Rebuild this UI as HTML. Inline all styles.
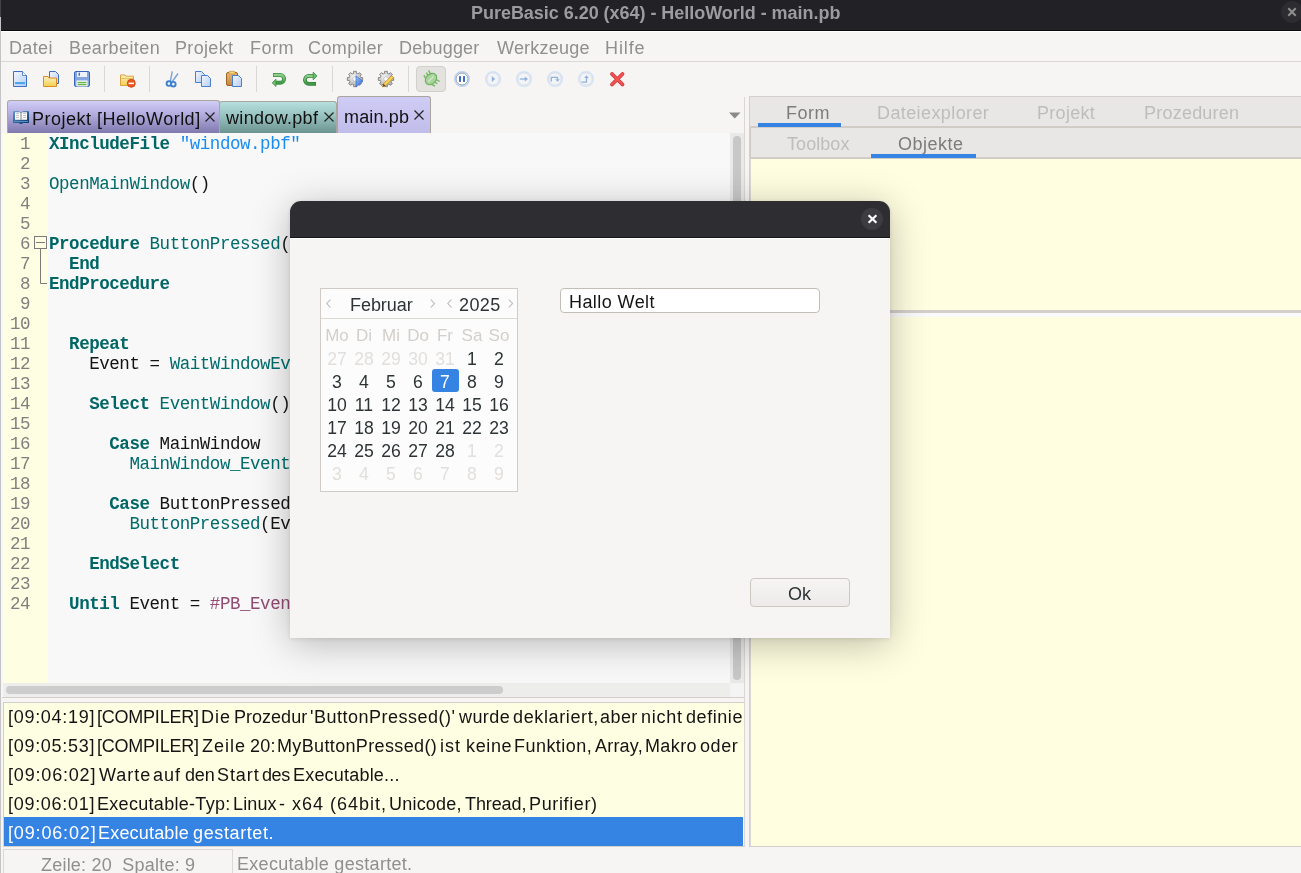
<!DOCTYPE html>
<html><head><meta charset="utf-8">
<style>
*{box-sizing:border-box;margin:0;padding:0}
html,body{width:1301px;height:873px;overflow:hidden;background:#f6f5f4;font-family:"Liberation Sans",sans-serif;position:relative}
.a{position:absolute}
.tx{position:absolute;will-change:transform;white-space:pre;line-height:normal;font-family:"Liberation Sans",sans-serif}
.code{position:absolute;will-change:transform;font-family:"Liberation Mono",monospace;font-size:17.5px;letter-spacing:-0.45px;white-space:pre;line-height:20px}
.kw{color:#006666;font-weight:bold}
.fn{color:#006b6b}
.str{color:#1a8cf0}
.cst{color:#924b72}
svg{position:absolute;overflow:visible}
</style></head><body>

<div class="a" style="left:0;top:0;width:1301px;height:31px;background:#222126"></div>
<div class="a" style="left:0;top:30px;width:1301px;height:1px;background:#0b0b0e"></div>
<div class="a" style="left:0;top:31px;width:1301px;height:1px;background:#ffffff"></div>
<div class="tx" style="left:470.5px;top:3.0px;font-size:18px;letter-spacing:-0.033px;color:#9c9c9e;font-weight:bold;">PureBasic 6.20 (x64) - HelloWorld - main.pb</div>

<div class="a" style="left:1281px;top:1px;width:22px;height:22px;border-radius:11px;background:#2d2c31"></div>
<svg style="left:1288px;top:8px" width="8" height="8"><path d="M0.3 0.3L7.7 7.7M7.7 0.3L0.3 7.7" stroke="#8e8e8e" stroke-width="2.1"/></svg>
<div class="a" style="left:0;top:17px;width:1px;height:856px;background:#c4c4c4"></div>
<div class="a" style="left:0;top:0;width:1px;height:17px;background:#444446"></div>
<div class="tx" style="left:9.0px;top:38.0px;font-size:18px;letter-spacing:0.35px;color:#8f8f8f;">Datei</div>

<div class="tx" style="left:69.0px;top:38.0px;font-size:18px;letter-spacing:0.4px;color:#8f8f8f;">Bearbeiten</div>

<div class="tx" style="left:174.8px;top:38.0px;font-size:18px;letter-spacing:0.333px;color:#8f8f8f;">Projekt</div>

<div class="tx" style="left:249.6px;top:38.0px;font-size:18px;letter-spacing:0.467px;color:#8f8f8f;">Form</div>

<div class="tx" style="left:308.4px;top:38.0px;font-size:18px;letter-spacing:0.4px;color:#8f8f8f;">Compiler</div>

<div class="tx" style="left:399.4px;top:38.0px;font-size:18px;letter-spacing:0.171px;color:#8f8f8f;">Debugger</div>

<div class="tx" style="left:496.6px;top:38.0px;font-size:18px;letter-spacing:0.225px;color:#8f8f8f;">Werkzeuge</div>

<div class="tx" style="left:604.7px;top:38.0px;font-size:18px;letter-spacing:0.9px;color:#8f8f8f;">Hilfe</div>

<div class="a" style="left:1px;top:61px;width:1300px;height:1px;background:#dcd9d5"></div>
<div class="a" style="left:104px;top:66px;width:1px;height:26px;background:#dad8d4"></div>
<div class="a" style="left:149px;top:66px;width:1px;height:26px;background:#dad8d4"></div>
<div class="a" style="left:256px;top:66px;width:1px;height:26px;background:#dad8d4"></div>
<div class="a" style="left:332px;top:66px;width:1px;height:26px;background:#dad8d4"></div>
<div class="a" style="left:408px;top:66px;width:1px;height:26px;background:#dad8d4"></div>
<div class="a" style="left:416px;top:66px;width:30px;height:26px;border-radius:4px;background:#e3e2de;border:1px solid #d2d0cb"></div>
<svg width="0" height="0" style="left:0;top:0"><defs>
<linearGradient id="gpage" x1="0" y1="0" x2="1" y2="1"><stop offset="0" stop-color="#f3f7fd"/><stop offset="1" stop-color="#b6cef3"/></linearGradient>
<linearGradient id="gfold" x1="0" y1="0" x2="0" y2="1"><stop offset="0" stop-color="#fdf0c0"/><stop offset="1" stop-color="#f5cf50"/></linearGradient>
<linearGradient id="gclip" x1="0" y1="0" x2="0" y2="1"><stop offset="0" stop-color="#e7b87a"/><stop offset="1" stop-color="#c7843c"/></linearGradient>
<linearGradient id="ggreen" x1="0" y1="0" x2="0" y2="1"><stop offset="0" stop-color="#8fd08a"/><stop offset="1" stop-color="#3f9a45"/></linearGradient>
<linearGradient id="gblue" x1="0" y1="0" x2="1" y2="1"><stop offset="0" stop-color="#9cc0f2"/><stop offset="1" stop-color="#2a66d4"/></linearGradient>
<radialGradient id="ggear" cx="0.4" cy="0.35" r="0.7"><stop offset="0" stop-color="#f4f4f4"/><stop offset="1" stop-color="#a9a9a9"/></radialGradient>
</defs></svg>
<svg style="left:13px;top:71px" width="14" height="16"><path d="M0.5 0.5H9.5L13.5 4.5V15.5H0.5Z" fill="url(#gpage)" stroke="#3d70c4"/><path d="M9.5 0.5V4.5H13.5" fill="#fff" stroke="#3d70c4" stroke-width="0.8"/><rect x="2" y="11" width="10" height="2.2" fill="#4fa6f0"/></svg>
<svg style="left:43px;top:71px" width="17" height="16"><path d="M6.5 0.5H12.5L15.5 3.5V12.5H6.5Z" fill="url(#gpage)" stroke="#3d70c4"/><path d="M0.5 5.5H5L6 7H13.5V15.5H0.5Z" fill="url(#gfold)" stroke="#dc8e24"/><path d="M1 9H13" stroke="#f7e7a5" stroke-width="1"/></svg>
<svg style="left:74px;top:71px" width="16" height="16"><rect x="0.5" y="0.5" width="15" height="15" rx="1.5" fill="#86a6e2" stroke="#3a64be"/><rect x="3" y="1" width="10" height="5" fill="#eef3fb"/><rect x="4.6" y="1.6" width="1.3" height="3.2" fill="#3a64be"/><rect x="2.5" y="9.5" width="11" height="6" fill="#fff"/><rect x="3.5" y="10.8" width="9" height="1.5" fill="#68b44a"/><rect x="3.5" y="13" width="9" height="1.3" fill="#68b44a"/></svg>
<svg style="left:120px;top:74px" width="16" height="14"><path d="M0.5 1H5L6 2.2H13.5V11.5H0.5Z" fill="url(#gfold)" stroke="#d9a43e"/><path d="M1 4.5H13" stroke="#e3b950" stroke-width="0.8"/><circle cx="11.3" cy="9.3" r="4" fill="#ea5a1e" stroke="#c8401a" stroke-width="0.8"/><rect x="8.6" y="8.6" width="5.4" height="1.5" fill="#fff"/></svg>
<svg style="left:166px;top:71px" width="13" height="16"><path d="M4.2 11L6.3 0.3M6.3 10.5L12 2.5" stroke="#7aa3d6" stroke-width="1.4" fill="none"/><circle cx="2.9" cy="12.6" r="2.3" fill="none" stroke="#3f81cc" stroke-width="1.9"/><circle cx="7.3" cy="13.2" r="2.3" fill="none" stroke="#3f81cc" stroke-width="1.9"/></svg>
<svg style="left:195px;top:71px" width="17" height="16"><path d="M0.5 0.5H6.5L9.5 3.5V11.5H0.5Z" fill="url(#gpage)" stroke="#4a7fd0"/><path d="M6.5 4.5H12.5L15.5 7.5V15.5H6.5Z" fill="url(#gpage)" stroke="#4a7fd0"/></svg>
<svg style="left:226px;top:71px" width="17" height="16"><rect x="0.5" y="1.5" width="11" height="13" rx="1.5" fill="url(#gclip)" stroke="#9e6522"/><rect x="3" y="0.3" width="6" height="2.8" rx="0.8" fill="#f1d27a" stroke="#b98a2e" stroke-width="0.6"/><path d="M6.5 4.5H12.5L15.5 7.5V15.5H6.5Z" fill="url(#gpage)" stroke="#4a7fd0"/></svg>
<svg style="left:272px;top:72px" width="16" height="16"><path d="M1 3H8.2A3.9 3.9 0 0 1 8.2 10.8H3.6" fill="none" stroke="#3d8f44" stroke-width="3.9"/><path d="M1.6 3H8.2A3.9 3.9 0 0 1 8.2 10.8H3.6" fill="none" stroke="url(#ggreen)" stroke-width="2.3"/><path d="M0.2 10.8L3.9 7.1V14.6Z" fill="#6cbb6c" stroke="#3d8f44" stroke-width="0.8" stroke-linejoin="round"/></svg>
<svg style="left:303px;top:72px" width="16" height="16"><path d="M13 11.85H5.9A3.97 3.97 0 0 1 5.9 3.9H10.6" fill="none" stroke="#2f7d36" stroke-width="3.7"/><path d="M12.4 11.85H5.9A3.97 3.97 0 0 1 5.9 3.9H10.6" fill="none" stroke="url(#ggreen)" stroke-width="2.1"/><path d="M14 3.9L10.2 0.1V7.9Z" fill="#6cbb6c" stroke="#3d8f44" stroke-width="0.8" stroke-linejoin="round"/></svg>
<svg style="left:347px;top:71px" width="17" height="16"><path d="M5.83,2.62 L6.65,2.36 L6.54,0.34 L9.46,0.34 L9.35,2.36 L10.27,2.66 L11.03,3.05 L12.38,1.55 L14.45,3.62 L12.95,4.97 L13.38,5.83 L13.64,6.65 L15.66,6.54 L15.66,9.46 L13.64,9.35 L13.34,10.27 L12.95,11.03 L14.45,12.38 L12.38,14.45 L11.03,12.95 L10.17,13.38 L9.35,13.64 L9.46,15.66 L6.54,15.66 L6.65,13.64 L5.73,13.34 L4.97,12.95 L3.62,14.45 L1.55,12.38 L3.05,11.03 L2.62,10.17 L2.36,9.35 L0.34,9.46 L0.34,6.54 L2.36,6.65 L2.66,5.73 L3.05,4.97 L1.55,3.62 L3.62,1.55 L4.97,3.05Z" fill="url(#ggear)" stroke="#8a8a8a" stroke-width="1"/><circle cx="8" cy="8" r="2.3" fill="#fafafa" stroke="#b0b0b0" stroke-width="0.6"/><path d="M9 4.8L16 10.3L9 16Z" fill="url(#gblue)" stroke="#2a62c8" stroke-width="0.6"/></svg>
<svg style="left:378px;top:71px" width="17" height="16"><path d="M5.83,2.62 L6.65,2.36 L6.54,0.34 L9.46,0.34 L9.35,2.36 L10.27,2.66 L11.03,3.05 L12.38,1.55 L14.45,3.62 L12.95,4.97 L13.38,5.83 L13.64,6.65 L15.66,6.54 L15.66,9.46 L13.64,9.35 L13.34,10.27 L12.95,11.03 L14.45,12.38 L12.38,14.45 L11.03,12.95 L10.17,13.38 L9.35,13.64 L9.46,15.66 L6.54,15.66 L6.65,13.64 L5.73,13.34 L4.97,12.95 L3.62,14.45 L1.55,12.38 L3.05,11.03 L2.62,10.17 L2.36,9.35 L0.34,9.46 L0.34,6.54 L2.36,6.65 L2.66,5.73 L3.05,4.97 L1.55,3.62 L3.62,1.55 L4.97,3.05Z" fill="url(#ggear)" stroke="#8a8a8a" stroke-width="1"/><circle cx="8" cy="8" r="2.3" fill="#fafafa" stroke="#b0b0b0" stroke-width="0.6"/><path d="M4.5 15.8L5.5 12.8L13.6 4.7L15.6 6.7L7.5 14.8Z" fill="#f5d54a" stroke="#c98a30" stroke-width="0.8"/><path d="M4.5 15.8L5.5 12.8L7.5 14.8Z" fill="#6a3c12"/></svg>
<svg style="left:422px;top:70px" width="18" height="18"><path d="M3.49 8.01L2.21 5.61M9.99 14.51L12.39 15.79M5.89 5.61L4.62 3.20M12.39 12.11L14.80 13.38M8.15 3.34L6.88 0.94M14.66 9.85L17.06 11.12" stroke="#79bd6c" stroke-width="1.6" stroke-linecap="round"/><ellipse cx="9" cy="9" rx="4.9" ry="6.4" transform="rotate(45 9 9)" fill="#a9d49b" stroke="#6fae62" stroke-width="1.1"/><path d="M6.4 11.6L11.6 6.4" stroke="#d8edd0" stroke-width="1.3"/></svg>
<svg style="left:454px;top:71px" width="16" height="16"><circle cx="8" cy="8" r="7.3" fill="none" stroke="#b9d2f2" stroke-width="1.4"/><circle cx="8" cy="8" r="6" fill="#fdfdfd" stroke="#8a94a4" stroke-width="0.9"/><rect x="5" y="5.1" width="2" height="5.8" fill="#3a6fc4"/><rect x="9" y="5.1" width="2" height="5.8" fill="#3a6fc4"/></svg>
<svg style="left:485px;top:71px" width="16" height="16"><circle cx="8" cy="8" r="7.3" fill="none" stroke="#d3e3f7" stroke-width="1.5"/><circle cx="8" cy="8" r="6.1" fill="#f2f4f8" stroke="#d6d9de" stroke-width="0.8"/><path d="M6.8 5L10.2 8L6.8 11Z" fill="#90b0de"/></svg>
<svg style="left:516px;top:71px" width="16" height="16"><circle cx="8" cy="8" r="7.3" fill="none" stroke="#d3e3f7" stroke-width="1.5"/><circle cx="8" cy="8" r="6.1" fill="#f2f4f8" stroke="#d6d9de" stroke-width="0.8"/><path d="M3.8 8H9" stroke="#90b0de" stroke-width="1.3"/><path d="M8.8 5.6L12 8L8.8 10.4Z" fill="#90b0de"/></svg>
<svg style="left:547px;top:71px" width="16" height="16"><circle cx="8" cy="8" r="7.3" fill="none" stroke="#d3e3f7" stroke-width="1.5"/><circle cx="8" cy="8" r="6.1" fill="#f2f4f8" stroke="#d6d9de" stroke-width="0.8"/><path d="M4.3 10.5V6.3H10.5V8.3" fill="none" stroke="#90b0de" stroke-width="1.3"/><path d="M8.2 8.2H12.8L10.5 10.8Z" fill="#90b0de"/></svg>
<svg style="left:578px;top:71px" width="16" height="16"><circle cx="8" cy="8" r="7.3" fill="none" stroke="#d3e3f7" stroke-width="1.5"/><circle cx="8" cy="8" r="6.1" fill="#f2f4f8" stroke="#d6d9de" stroke-width="0.8"/><path d="M3.5 11.2H8.5V6.8" fill="none" stroke="#90b0de" stroke-width="1.3"/><path d="M6.2 7L8.5 4.2L10.8 7Z" fill="#90b0de"/></svg>
<svg style="left:609px;top:71px" width="16" height="16"><path d="M3 3L13.5 13.5M13.5 3L3 13.5" stroke="#d23030" stroke-width="3.8" stroke-linecap="round"/><path d="M3 3L13.5 13.5M13.5 3L3 13.5" stroke="#f25454" stroke-width="2.4" stroke-linecap="round"/></svg>
<div class="a" style="left:7px;top:100px;width:213px;height:33px;border:1px solid #aaa59f;border-bottom:none;border-radius:3px 3px 0 0;background:linear-gradient(#d0cdf7,#b0aadc 45%,#7f79ae)"></div>
<div class="a" style="left:219px;top:101px;width:118px;height:32px;border:1px solid #aaa59f;border-bottom:none;border-radius:3px 3px 0 0;background:linear-gradient(#b5dfdc,#98c2bf 45%,#6b9491)"></div>
<div class="a" style="left:337px;top:96px;width:94px;height:37px;border:1px solid #aaa59f;border-bottom:none;border-radius:3px 3px 0 0;background:linear-gradient(#cfccf5,#c1bdea)"></div>
<div class="tx" style="left:31.7px;top:108.7px;font-size:18px;letter-spacing:0.495px;color:#111;">Projekt [HelloWorld]</div>

<div class="tx" style="left:225.7px;top:108.0px;font-size:18px;letter-spacing:0.322px;color:#111;">window.pbf</div>

<div class="tx" style="left:343.7px;top:106.8px;font-size:18px;letter-spacing:0.15px;color:#111;">main.pb</div>

<svg style="left:205px;top:112px" width="10" height="10"><path d="M0.5 0.5L9.5 9.5M9.5 0.5L0.5 9.5" stroke="#222" stroke-width="1.2"/></svg>
<svg style="left:323.5px;top:112px" width="10" height="10"><path d="M0.5 0.5L9.5 9.5M9.5 0.5L0.5 9.5" stroke="#222" stroke-width="1.2"/></svg>
<svg style="left:414px;top:110px" width="10" height="10"><path d="M0.5 0.5L9.5 9.5M9.5 0.5L0.5 9.5" stroke="#222" stroke-width="1.2"/></svg>
<svg style="left:13px;top:110px" width="16" height="15"><defs><linearGradient id="gbook" x1="0" y1="0" x2="1" y2="1"><stop offset="0" stop-color="#5a96cc"/><stop offset="1" stop-color="#0a3468"/></linearGradient></defs><path d="M0 1.2H5.5L8 2.2L10.5 1.2H16V13H9.5V14H6.5V13H0Z" fill="url(#gbook)"/><path d="M2 2.3H6.5L8 3L9.5 2.3H14V9.8H2Z" fill="#fdfdfd"/><rect x="7.4" y="2.8" width="1.3" height="7" fill="#9a9a9a"/><path d="M3 3.6H6M3 5.6H6M3 7.6H6M10 3.6H13M10 5.6H13M10 7.6H13" stroke="#b9b9b9" stroke-width="0.9"/><rect x="1" y="11" width="14" height="0.9" fill="#5d94c8"/></svg>
<svg style="left:729px;top:112px" width="12" height="7"><path d="M0 0.5H11.5L5.75 6.5Z" fill="#8a8a8a"/></svg>
<div class="a" style="left:2px;top:133px;width:743px;height:565px;background:#f8f8f8;border-right:1px solid #d3cfca;border-bottom:1px solid #d3cfca"></div>
<div class="a" style="left:3px;top:133px;width:45px;height:550px;background:#fefee2"></div>
<div class="a" style="left:730px;top:133px;width:14px;height:550px;background:#e9e9e8"></div>
<div class="a" style="left:733px;top:136px;width:8px;height:544px;border-radius:4px;background:#c8c8c8"></div>
<div class="a" style="left:3px;top:683px;width:727px;height:14px;background:#ededec"></div>
<div class="a" style="left:730px;top:683px;width:14px;height:14px;background:#f4f4f4"></div>
<div class="a" style="left:6px;top:686px;width:497px;height:8px;border-radius:4px;background:#cdcdcd"></div>
<div class="code" style="left:3px;top:134px;width:27px;text-align:right;color:#7f7f7f">1
2
3
4
5
6
7
8
9
10
11
12
13
14
15
16
17
18
19
20
21
22
23
24</div>
<div class="code" style="left:49px;top:134px;color:#141414"><span class="kw">XIncludeFile</span> <span class="str">"window.pbf"</span>

<span class="fn">OpenMainWindow</span>()


<span class="kw">Procedure</span> <span class="fn">ButtonPressed</span>(
  <span class="kw">End</span>
<span class="kw">EndProcedure</span>


  <span class="kw">Repeat</span>
    Event = <span class="fn">WaitWindowEv</span>

    <span class="kw">Select</span> <span class="fn">EventWindow</span>()

      <span class="kw">Case</span> MainWindow
        <span class="fn">MainWindow_Event</span>

      <span class="kw">Case</span> ButtonPressed
        <span class="fn">ButtonPressed</span>(Ev

    <span class="kw">EndSelect</span>

  <span class="kw">Until</span> Event = <span class="cst">#PB_Even</span></div>
<svg style="left:34px;top:236px" width="14" height="52"><rect x="0.5" y="0.5" width="12" height="12" fill="#fefee2" stroke="#7a7a7a"/><path d="M2 6.5H11" stroke="#7a7a7a"/><path d="M6.5 12.5V47.5H13" fill="none" stroke="#7a7a7a"/></svg>
<div class="a" style="left:3px;top:702px;width:742px;height:145px;background:#fefee2;border:1px solid #d3cfca"></div>
<div class="a" style="left:4px;top:817px;width:739px;height:29px;background:#3584e4"></div>
<div class="tx" style="left:8.0px;top:707.0px;font-size:18px;letter-spacing:0.708px;color:#141414">[09:04:19]</div>
<div class="tx" style="left:96.8px;top:707.0px;font-size:18px;letter-spacing:-0.226px;color:#141414">[COMPILER]</div>
<div class="tx" style="left:201.4px;top:707.0px;font-size:18px;letter-spacing:1.0px;color:#141414">Die</div>
<div class="tx" style="left:233.5px;top:707.0px;font-size:18px;letter-spacing:0.016px;color:#141414">Prozedur</div>
<div class="tx" style="left:310.3px;top:707.0px;font-size:18px;letter-spacing:0.505px;color:#141414">'ButtonPressed()'</div>
<div class="tx" style="left:459.0px;top:707.0px;font-size:18px;letter-spacing:0.43px;color:#141414">wurde</div>
<div class="tx" style="left:512.8px;top:707.0px;font-size:18px;letter-spacing:0.63px;color:#141414">deklariert,</div>
<div class="tx" style="left:600.0px;top:707.0px;font-size:18px;letter-spacing:0.43px;color:#141414">aber</div>
<div class="tx" style="left:641.0px;top:707.0px;font-size:18px;letter-spacing:0.73px;color:#141414">nicht</div>
<div class="tx" style="left:685.5px;top:707.0px;font-size:18px;letter-spacing:0.563px;color:#141414">definie</div>
<div class="tx" style="left:8.0px;top:736.0px;font-size:18px;letter-spacing:0.708px;color:#141414">[09:05:53]</div>
<div class="tx" style="left:96.8px;top:736.0px;font-size:18px;letter-spacing:-0.226px;color:#141414">[COMPILER]</div>
<div class="tx" style="left:202.4px;top:736.0px;font-size:18px;letter-spacing:1.0px;color:#141414">Zeile</div>
<div class="tx" style="left:249.6px;top:736.0px;font-size:18px;letter-spacing:0.18px;color:#141414">20:</div>
<div class="tx" style="left:277.4px;top:736.0px;font-size:18px;letter-spacing:0.355px;color:#141414">MyButtonPressed()</div>
<div class="tx" style="left:439.9px;top:736.0px;font-size:18px;letter-spacing:1.0px;color:#141414">ist</div>
<div class="tx" style="left:465.6px;top:736.0px;font-size:18px;letter-spacing:0.63px;color:#141414">keine</div>
<div class="tx" style="left:513.8px;top:736.0px;font-size:18px;letter-spacing:0.455px;color:#141414">Funktion,</div>
<div class="tx" style="left:594.8px;top:736.0px;font-size:18px;letter-spacing:0.21px;color:#141414">Array,</div>
<div class="tx" style="left:645.2px;top:736.0px;font-size:18px;letter-spacing:0.38px;color:#141414">Makro</div>
<div class="tx" style="left:699.9px;top:736.0px;font-size:18px;letter-spacing:0.597px;color:#141414">oder</div>
<div class="tx" style="left:8.0px;top:765.0px;font-size:18px;letter-spacing:0.819px;color:#141414">[09:06:02]</div>
<div class="tx" style="left:99.3px;top:765.0px;font-size:18px;letter-spacing:0.98px;color:#141414">Warte</div>
<div class="tx" style="left:153.2px;top:765.0px;font-size:18px;letter-spacing:1.0px;color:#141414">auf</div>
<div class="tx" style="left:184.5px;top:765.0px;font-size:18px;letter-spacing:-0.17px;color:#141414">den</div>
<div class="tx" style="left:216.6px;top:765.0px;font-size:18px;letter-spacing:0.93px;color:#141414">Start</div>
<div class="tx" style="left:261.9px;top:765.0px;font-size:18px;letter-spacing:-0.4px;color:#141414">des</div>
<div class="tx" style="left:292.5px;top:765.0px;font-size:18px;letter-spacing:0.197px;color:#141414">Executable...</div>
<div class="tx" style="left:8.0px;top:794.0px;font-size:18px;letter-spacing:0.708px;color:#141414">[09:06:01]</div>
<div class="tx" style="left:96.8px;top:794.0px;font-size:18px;letter-spacing:0.301px;color:#141414">Executable-Typ:</div>
<div class="tx" style="left:232.7px;top:794.0px;font-size:18px;letter-spacing:0.13px;color:#141414">Linux</div>
<div class="tx" style="left:279.4px;top:794.0px;font-size:18px;letter-spacing:0.13px;color:#141414">-</div>
<div class="tx" style="left:292.0px;top:794.0px;font-size:18px;letter-spacing:1.0px;color:#141414">x64</div>
<div class="tx" style="left:329.8px;top:794.0px;font-size:18px;letter-spacing:1.0px;color:#141414">(64bit,</div>
<div class="tx" style="left:388.6px;top:794.0px;font-size:18px;letter-spacing:0.216px;color:#141414">Unicode,</div>
<div class="tx" style="left:464.9px;top:794.0px;font-size:18px;letter-spacing:-0.103px;color:#141414">Thread,</div>
<div class="tx" style="left:528.8px;top:794.0px;font-size:18px;letter-spacing:0.63px;color:#141414">Purifier)</div>
<div class="tx" style="left:8.0px;top:823.0px;font-size:18px;letter-spacing:0.841px;color:#ffffff">[09:06:02]</div>
<div class="tx" style="left:98.4px;top:823.0px;font-size:18px;letter-spacing:0.186px;color:#ffffff">Executable</div>
<div class="tx" style="left:192.6px;top:823.0px;font-size:18px;letter-spacing:0.619px;color:#ffffff">gestartet.</div>
<div class="a" style="left:744px;top:97px;width:1px;height:750px;background:#dad6d1"></div>
<div class="a" style="left:3px;top:849px;width:230px;height:30px;border:1px solid #dcd9d5"></div>
<div class="tx" style="left:41.0px;top:854.5px;font-size:18px;letter-spacing:0.211px;color:#8f8f8f;">Zeile: 20  Spalte: 9</div>

<div class="tx" style="left:236.8px;top:854.4px;font-size:18px;letter-spacing:0.3px;color:#8f8f8f;">Executable gestartet.</div>

<div class="a" style="left:749px;top:96px;width:560px;height:751px;border:1px solid #d3cfca;background:#fffee0"></div>
<div class="a" style="left:750px;top:97px;width:551px;height:31px;background:#e8e7e5;border-bottom:2px solid #d2ccc6"></div>
<div class="a" style="left:750px;top:128px;width:551px;height:31px;background:#e8e7e5;border-left:1px solid #d2ccc6;border-bottom:2px solid #d2ccc6"></div>
<div class="a" style="left:758px;top:123px;width:83px;height:4px;background:#3584e4"></div>
<div class="a" style="left:871px;top:154px;width:105px;height:4px;background:#3584e4"></div>
<div class="tx" style="left:786.0px;top:102.6px;font-size:18px;letter-spacing:0.533px;color:#7c7c7c;">Form</div>

<div class="tx" style="left:876.8px;top:102.6px;font-size:18px;letter-spacing:0.4px;color:#bdbdbd;">Dateiexplorer</div>

<div class="tx" style="left:1036.5px;top:102.6px;font-size:18px;letter-spacing:0.3px;color:#bdbdbd;">Projekt</div>

<div class="tx" style="left:1143.6px;top:102.6px;font-size:18px;letter-spacing:0.222px;color:#bdbdbd;">Prozeduren</div>

<div class="tx" style="left:787.4px;top:133.8px;font-size:18px;letter-spacing:0.067px;color:#bdbdbd;">Toolbox</div>

<div class="tx" style="left:898.3px;top:133.8px;font-size:18px;letter-spacing:0.5px;color:#7c7c7c;">Objekte</div>

<div class="a" style="left:750px;top:159px;width:1px;height:687px;background:#dcd8d3"></div>
<div class="a" style="left:751px;top:310px;width:550px;height:3px;background:#d3cfcb"></div>
<div class="a" style="left:751px;top:313px;width:550px;height:4px;background:#fafafa"></div>
<div class="a" style="left:290px;top:201px;width:600px;height:437px;background:#f6f5f4;border-radius:11px 11px 0 0;box-shadow:0 1px 5px rgba(0,0,0,0.10),0 6px 38px rgba(0,0,0,0.26)"></div>
<div class="a" style="left:290px;top:201px;width:600px;height:37px;background:#2e2d32;border-radius:11px 11px 0 0"></div>
<div class="a" style="left:290px;top:237px;width:600px;height:1px;background:#16161a"></div>
<div class="a" style="left:290px;top:238px;width:600px;height:1px;background:#ffffff"></div>
<div class="a" style="left:861px;top:208px;width:22px;height:22px;border-radius:11px;background:#3d3c41"></div>
<svg style="left:867.5px;top:215px" width="9" height="8"><path d="M0.6 0.3L8.4 7.7M8.4 0.3L0.6 7.7" stroke="#ffffff" stroke-width="2.2"/></svg>
<div class="a" style="left:320px;top:288px;width:198px;height:204px;background:#fcfcfc;border:1px solid #d0cbc6"></div>
<div class="a" style="left:321px;top:318px;width:196px;height:1px;background:#dcd8d3"></div>
<div class="tx" style="left:349.6px;top:295.0px;font-size:18px;letter-spacing:-0.05px;color:#2e3436;">Februar</div>

<div class="tx" style="left:458.6px;top:295.0px;font-size:18px;letter-spacing:0.4px;color:#2e3436;">2025</div>

<svg style="left:326px;top:299px" width="6" height="9"><path d="M4.5 0.5L0.8 4.5L4.5 8.5" stroke="#b8b8b8" stroke-width="1.1" fill="none"/></svg>
<svg style="left:447px;top:299px" width="6" height="9"><path d="M4.5 0.5L0.8 4.5L4.5 8.5" stroke="#b8b8b8" stroke-width="1.1" fill="none"/></svg>
<svg style="left:430px;top:299px" width="6" height="9"><path d="M0.8 0.5L4.5 4.5L0.8 8.5" stroke="#b8b8b8" stroke-width="1.1" fill="none"/></svg>
<svg style="left:507.5px;top:299px" width="6" height="9"><path d="M0.8 0.5L4.5 4.5L0.8 8.5" stroke="#b8b8b8" stroke-width="1.1" fill="none"/></svg>
<div class="a" style="left:432px;top:369px;width:27px;height:23px;border-radius:3px;background:#3584e4"></div>
<div class="tx" style="left:317px;top:326.2px;width:40px;text-align:center;font-size:17px;color:#d3cfca">Mo</div>
<div class="tx" style="left:344px;top:326.2px;width:40px;text-align:center;font-size:17px;color:#d3cfca">Di</div>
<div class="tx" style="left:371px;top:326.2px;width:40px;text-align:center;font-size:17px;color:#d3cfca">Mi</div>
<div class="tx" style="left:398px;top:326.2px;width:40px;text-align:center;font-size:17px;color:#d3cfca">Do</div>
<div class="tx" style="left:425px;top:326.2px;width:40px;text-align:center;font-size:17px;color:#d3cfca">Fr</div>
<div class="tx" style="left:452px;top:326.2px;width:40px;text-align:center;font-size:17px;color:#d3cfca">Sa</div>
<div class="tx" style="left:479px;top:326.2px;width:40px;text-align:center;font-size:17px;color:#d3cfca">So</div>
<div class="tx" style="left:317px;top:349px;width:40px;text-align:center;font-size:17.6px;color:#e2dfdc">27</div>
<div class="tx" style="left:344px;top:349px;width:40px;text-align:center;font-size:17.6px;color:#e2dfdc">28</div>
<div class="tx" style="left:371px;top:349px;width:40px;text-align:center;font-size:17.6px;color:#e2dfdc">29</div>
<div class="tx" style="left:398px;top:349px;width:40px;text-align:center;font-size:17.6px;color:#e2dfdc">30</div>
<div class="tx" style="left:425px;top:349px;width:40px;text-align:center;font-size:17.6px;color:#e2dfdc">31</div>
<div class="tx" style="left:452px;top:349px;width:40px;text-align:center;font-size:17.6px;color:#2e3436">1</div>
<div class="tx" style="left:479px;top:349px;width:40px;text-align:center;font-size:17.6px;color:#2e3436">2</div>
<div class="tx" style="left:317px;top:372px;width:40px;text-align:center;font-size:17.6px;color:#2e3436">3</div>
<div class="tx" style="left:344px;top:372px;width:40px;text-align:center;font-size:17.6px;color:#2e3436">4</div>
<div class="tx" style="left:371px;top:372px;width:40px;text-align:center;font-size:17.6px;color:#2e3436">5</div>
<div class="tx" style="left:398px;top:372px;width:40px;text-align:center;font-size:17.6px;color:#2e3436">6</div>
<div class="tx" style="left:425px;top:372px;width:40px;text-align:center;font-size:17.6px;color:#ffffff">7</div>
<div class="tx" style="left:452px;top:372px;width:40px;text-align:center;font-size:17.6px;color:#2e3436">8</div>
<div class="tx" style="left:479px;top:372px;width:40px;text-align:center;font-size:17.6px;color:#2e3436">9</div>
<div class="tx" style="left:317px;top:395px;width:40px;text-align:center;font-size:17.6px;color:#2e3436">10</div>
<div class="tx" style="left:344px;top:395px;width:40px;text-align:center;font-size:17.6px;color:#2e3436">11</div>
<div class="tx" style="left:371px;top:395px;width:40px;text-align:center;font-size:17.6px;color:#2e3436">12</div>
<div class="tx" style="left:398px;top:395px;width:40px;text-align:center;font-size:17.6px;color:#2e3436">13</div>
<div class="tx" style="left:425px;top:395px;width:40px;text-align:center;font-size:17.6px;color:#2e3436">14</div>
<div class="tx" style="left:452px;top:395px;width:40px;text-align:center;font-size:17.6px;color:#2e3436">15</div>
<div class="tx" style="left:479px;top:395px;width:40px;text-align:center;font-size:17.6px;color:#2e3436">16</div>
<div class="tx" style="left:317px;top:418px;width:40px;text-align:center;font-size:17.6px;color:#2e3436">17</div>
<div class="tx" style="left:344px;top:418px;width:40px;text-align:center;font-size:17.6px;color:#2e3436">18</div>
<div class="tx" style="left:371px;top:418px;width:40px;text-align:center;font-size:17.6px;color:#2e3436">19</div>
<div class="tx" style="left:398px;top:418px;width:40px;text-align:center;font-size:17.6px;color:#2e3436">20</div>
<div class="tx" style="left:425px;top:418px;width:40px;text-align:center;font-size:17.6px;color:#2e3436">21</div>
<div class="tx" style="left:452px;top:418px;width:40px;text-align:center;font-size:17.6px;color:#2e3436">22</div>
<div class="tx" style="left:479px;top:418px;width:40px;text-align:center;font-size:17.6px;color:#2e3436">23</div>
<div class="tx" style="left:317px;top:441px;width:40px;text-align:center;font-size:17.6px;color:#2e3436">24</div>
<div class="tx" style="left:344px;top:441px;width:40px;text-align:center;font-size:17.6px;color:#2e3436">25</div>
<div class="tx" style="left:371px;top:441px;width:40px;text-align:center;font-size:17.6px;color:#2e3436">26</div>
<div class="tx" style="left:398px;top:441px;width:40px;text-align:center;font-size:17.6px;color:#2e3436">27</div>
<div class="tx" style="left:425px;top:441px;width:40px;text-align:center;font-size:17.6px;color:#2e3436">28</div>
<div class="tx" style="left:452px;top:441px;width:40px;text-align:center;font-size:17.6px;color:#e2dfdc">1</div>
<div class="tx" style="left:479px;top:441px;width:40px;text-align:center;font-size:17.6px;color:#e2dfdc">2</div>
<div class="tx" style="left:317px;top:464px;width:40px;text-align:center;font-size:17.6px;color:#e2dfdc">3</div>
<div class="tx" style="left:344px;top:464px;width:40px;text-align:center;font-size:17.6px;color:#e2dfdc">4</div>
<div class="tx" style="left:371px;top:464px;width:40px;text-align:center;font-size:17.6px;color:#e2dfdc">5</div>
<div class="tx" style="left:398px;top:464px;width:40px;text-align:center;font-size:17.6px;color:#e2dfdc">6</div>
<div class="tx" style="left:425px;top:464px;width:40px;text-align:center;font-size:17.6px;color:#e2dfdc">7</div>
<div class="tx" style="left:452px;top:464px;width:40px;text-align:center;font-size:17.6px;color:#e2dfdc">8</div>
<div class="tx" style="left:479px;top:464px;width:40px;text-align:center;font-size:17.6px;color:#e2dfdc">9</div>
<div class="a" style="left:560px;top:288px;width:260px;height:25px;background:#fff;border:1px solid #c3beb8;border-radius:4px"></div>
<div class="tx" style="left:568.8px;top:292.0px;font-size:18px;letter-spacing:0.422px;color:#141414;">Hallo Welt</div>

<div class="a" style="left:750px;top:578px;width:100px;height:29px;border:1px solid #cdc7c2;border-radius:4px;background:linear-gradient(#f6f5f4,#edebe9)"></div>
<div class="tx" style="left:787.6px;top:583.8px;font-size:18px;letter-spacing:0.1px;color:#2e3436;">Ok</div>

</body></html>
